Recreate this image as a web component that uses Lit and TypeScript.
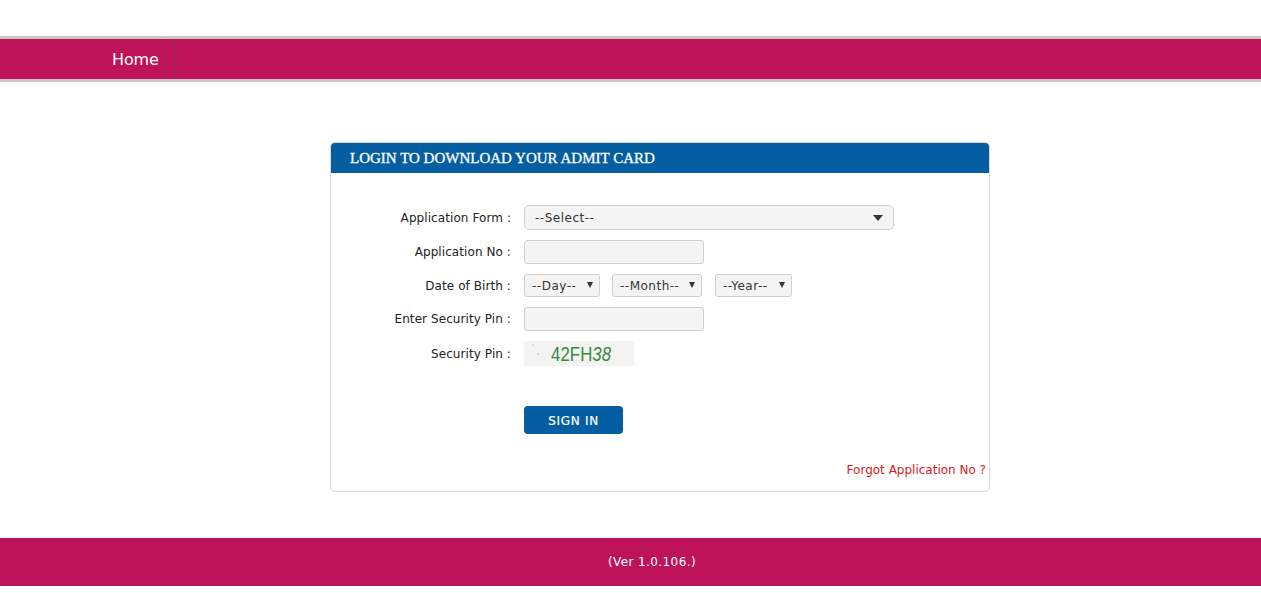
import { LitElement, html, css } from "lit";
import { customElement } from "lit/decorators.js";

const arrow = (w: number, h: number) => html`<svg class="arrow" width=${w} height=${h} viewBox="0 0 10 6" preserveAspectRatio="none"><path d="M0 0H10L5 6Z" fill="#333"/></svg>`;

@customElement("app-root")
export class AppRoot extends LitElement {
  static styles = css`
    :host { display: block; height: 593px; overflow: hidden; background: #fff; font-family: "DejaVu Sans", Verdana, sans-serif; font-size: 12px; letter-spacing: 0.08px; color: #222; }
    * { box-sizing: border-box; }
    .nav { margin-top: 36px; height: 46px; background: #be1359; border-top: 3px solid #c9c5c8; border-bottom: 3px solid #c9c5c8; display: flex; padding-left: 96px; }
    .nav a { height: 40px; padding: 1px 15px 0 16px; border-right: 1px solid #8f2a5e; color: #fff; font-size: 16px; line-height: 40px; letter-spacing: -0.1px; }
    .main { padding: 60px 0 0 330px; }
    .card { width: 660px; height: 350px; border: 1px solid #d8d8d8; border-radius: 5px; display: flex; flex-direction: column; }
    .head { height: 30px; margin: 0; background: #045ea1; border-radius: 4px 4px 0 0; padding: 0 0 0 19px; color: #fff; font: 15px/30px "Liberation Serif", serif; letter-spacing: 0; -webkit-text-stroke: 0.3px #fff; white-space: nowrap; }
    .form { display: grid; grid-template-columns: 180px 1fr; column-gap: 13px; padding-top: 32px; align-items: center; row-gap: 10px; }
    label { text-align: right; white-space: nowrap; }
    .pick { position: relative; display: block; }
    select, input { display: block; width: 100%; height: 100%; margin: 0; background: #f4f4f4; border: 1px solid #cfcfcf; border-radius: 3px; font: inherit; letter-spacing: 0.5px; color: #333; appearance: none; outline: none; }
    select { padding: 0 0 0 7px; }
    .arrow { position: absolute; pointer-events: none; }
    .wide { width: 370px; height: 25px; }
    .wide select { padding-left: 10px; border-radius: 5px; }
    .wide .arrow { right: 11px; top: 10px; }
    .field { width: 180px; height: 24px; }
    .dob { display: flex; height: 23px; }
    .dob .pick { height: 23px; }
    .dob .arrow { top: 8px; right: 7px; }
    .day { width: 76px; margin-right: 12px; }
    .month { width: 90px; margin-right: 13px; }
    .year { width: 77px; }
    .captcha { width: 110px; height: 25px; background-color: #f3f4f2;
      background-image: radial-gradient(circle, #cfd6cf 1px, transparent 1.5px), radial-gradient(circle, #dde3dd 1px, transparent 1.5px), radial-gradient(circle, #dde3dd 1px, transparent 1.5px);
      background-size: 4px 4px; background-repeat: no-repeat; background-position: 12px 11px, 7px 2px, 84px 5px;
      color: #38893f; font: 20px/27px "Liberation Sans", sans-serif; padding-left: 27px; white-space: nowrap; overflow: hidden; }
    .captcha span { display: inline-block; transform: scaleX(0.84); transform-origin: left center; }
    .btn { grid-column: 2; width: 99px; height: 28px; margin-top: 30px; border: 0; border-radius: 4px; background: #045ea1; color: #fff; font: 12px/30px "DejaVu Sans", sans-serif; letter-spacing: 0.7px; -webkit-text-stroke: 0.2px #fff; padding: 0; }
    .forgot { margin-top: auto; padding: 0 3px 14px 0; text-align: right; color: #d9181e; letter-spacing: 0; }
    .foot { margin-top: 46px; height: 48px; background: #be1359; color: #fff; text-align: center; line-height: 48px; padding-left: 43px; letter-spacing: 0.4px; }
  `;

  render() {
    return html`
      <nav class="nav"><a>Home</a></nav>
      <div class="main">
        <section class="card">
          <header class="head">LOGIN TO DOWNLOAD YOUR ADMIT CARD</header>
          <div class="form">
            <label>Application Form :</label>
            <span class="pick wide"><select><option>--Select--</option></select>${arrow(10, 6)}</span>
            <label>Application No :</label>
            <span class="field"><input /></span>
            <label>Date of Birth :</label>
            <div class="dob">
              <span class="pick day"><select><option>--Day--</option></select>${arrow(6, 6)}</span>
              <span class="pick month"><select><option>--Month--</option></select>${arrow(6, 6)}</span>
              <span class="pick year"><select><option>--Year--</option></select>${arrow(6, 6)}</span>
            </div>
            <label>Enter Security Pin :</label>
            <span class="field"><input /></span>
            <label>Security Pin :</label>
            <div class="captcha"><span>42FH<i>38</i></span></div>
            <button class="btn">SIGN IN</button>
          </div>
          <div class="forgot">Forgot Application No ?</div>
        </section>
      </div>
      <footer class="foot">(Ver 1.0.106.)</footer>
    `;
  }
}
